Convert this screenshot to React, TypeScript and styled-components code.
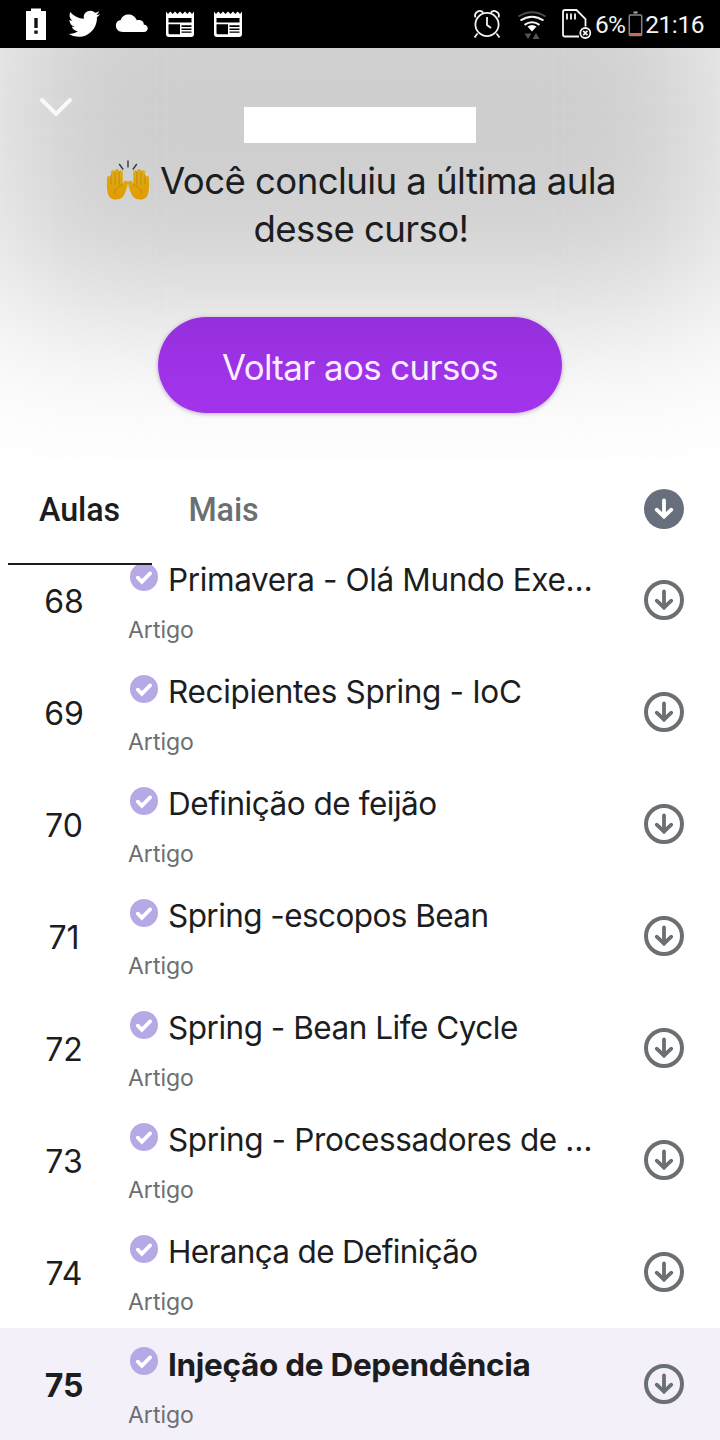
import React from "react";
import styled, { createGlobalStyle } from "styled-components";

const GlobalStyle = createGlobalStyle`
  * { box-sizing: border-box; }
  body { margin: 0; background: #fff; color: #1c1d1f; font-family: Inter, "Liberation Sans", sans-serif; }
`;

const Screen = styled.main`
  width: 720px;
  height: 1440px;
  overflow: hidden;
  display: flex;
  flex-direction: column;
  background: #fff;
`;

const StatusBar = styled.div`
  flex: none;
  height: 48px;
  background: #000;
  color: #f4f4f4;
  display: flex;
  justify-content: space-between;
  svg { display: block; flex: none; }
`;

const StatusText = styled.span<{ $spacing?: number }>`
  font: 400 24.5px/50px Roboto, sans-serif;
  letter-spacing: ${(p) => p.$spacing ?? 0}px;
`;

const StatusRight = styled.div`
  display: flex;
  width: 250px;
`;

const Hero = styled.header`
  flex: none;
  height: 412px;
  position: relative;
  isolation: isolate;
  overflow: hidden;
  display: flex;
  flex-direction: column;
  align-items: center;
  padding-top: 59px;
  &::before {
    content: "";
    position: absolute;
    z-index: -1;
    left: -14px;
    top: -125px;
    width: 748px;
    height: 386px;
    background: #cecece;
    filter: blur(82px);
  }
`;

const Collapse = styled.button`
  position: absolute;
  left: 32px;
  top: 40px;
  padding: 0;
  border: 0;
  background: none;
  svg { display: block; }
`;

const CourseName = styled.div`
  width: 232px;
  height: 36px;
  background: #fff;
`;

const Message = styled.h1`
  margin: 14px 0 0;
  font-size: 36.6px;
  font-weight: 400;
  line-height: 48px;
  letter-spacing: -0.58px;
  text-align: center;
  padding-left: 2px;
`;

const MessageLine = styled.span`
  display: flex;
  justify-content: center;
  svg { margin: 3px 10px 0 0; }
`;

const BackButton = styled.button`
  margin-top: 64px;
  width: 404px;
  height: 96px;
  padding: 3px 0 0;
  border: 0;
  border-radius: 48px;
  background: linear-gradient(#952fdc, #a134eb 80%);
  box-shadow: 0 1px 4px rgba(60, 20, 90, 0.35);
  color: #fbeeff;
  font: 400 34.8px Inter, "Liberation Sans", sans-serif;
  letter-spacing: -0.58px;
`;

const Tabs = styled.nav`
  flex: none;
  height: 105px;
  display: flex;
  align-items: stretch;
  padding: 0 36px 0 8px;
  position: relative;
  z-index: 1;
  background: #fff;
`;

const Tab = styled.button<{ $active?: boolean }>`
  width: 144px;
  padding: 0 1px 3px 0;
  border: 0;
  border-bottom: 2px solid ${(p) => (p.$active ? "#1c1d1f" : "transparent")};
  background: none;
  color: ${(p) => (p.$active ? "#1c1d1f" : "#6a6f73")};
  font: 500 32.3px Roboto, sans-serif;
  letter-spacing: -0.1px;
`;

const TabAction = styled.div`
  margin: 29px 0 0 auto;
`;

const LessonList = styled.div`
  margin-top: -21px;
`;

const Row = styled.article<{ $current?: boolean }>`
  height: 112px;
  display: flex;
  padding: 0 36px 0 0;
  background: ${(p) => (p.$current ? "#f3f0fa" : "#fff")};
  font-weight: ${(p) => (p.$current ? 700 : 400)};
`;

const Index = styled.div`
  width: 128px;
  text-align: center;
  font-size: 32px;
  line-height: 116px;
`;

const Details = styled.div`
  flex: 1;
  padding-top: 14px;
`;

const TitleLine = styled.div`
  height: 44px;
  display: flex;
  svg { display: block; margin: 5px 10px 0 2px; }
`;

const Title = styled.span<{ $spacing: number; $current?: boolean }>`
  font-size: 31.5px;
  line-height: ${(p) => (p.$current ? 45 : 43)}px;
  white-space: nowrap;
  letter-spacing: ${(p) => p.$spacing}px;
`;

const Kind = styled.div<{ $current?: boolean }>`
  margin-top: ${(p) => (p.$current ? 14 : 13)}px;
  font-size: 23px;
  line-height: 30px;
  font-weight: 400;
  color: #6a6f73;
`;

const Download = styled.div`
  padding-top: 36px;
  svg { display: block; }
`;

const DownloadIcon = ({ filled = false }: { filled?: boolean }) => (
  <svg width="40" height="40" viewBox="0 0 40 40" fill="none">
    <circle cx="20" cy="20" r={filled ? 20 : 18} fill={filled ? "#686f7c" : "none"} stroke={filled ? "none" : "#6a6f73"} strokeWidth="4" />
    <path d="M20 11.500v15.500M12.700 20.700l7.300 7 7.300-7" stroke={filled ? "#fff" : "#6a6f73"} strokeWidth="3.800" strokeLinecap="round" strokeLinejoin="miter" />
  </svg>
);

const CheckIcon = () => (
  <svg width="28" height="28" viewBox="0 0 28 28" fill="none">
    <circle cx="14" cy="14" r="14" fill="#b6a9e6" />
    <path d="M7.800 14.700l4.100 4.100 8.200-8.400" stroke="#fff" strokeWidth="3.800" strokeLinecap="round" />
  </svg>
);

const HandsIcon = () => (
  <svg width="44" height="44" viewBox="0 0 44 44" fill="none">
    <defs>
      <linearGradient id="skin" x1="0" y1="8" x2="0" y2="40" gradientUnits="userSpaceOnUse">
        <stop stopColor="#dcae1c" />
        <stop offset="1" stopColor="#e19a00" />
      </linearGradient>
      <g id="hand">
        <path d="M1 18c0-2.600 4-2.600 4 0V12c0-2.800 3.900-2.800 4 0 0-4.200 4.100-4.200 4.200 0 .2-2.600 3.600-2.400 3.600.2v12.300c.3-3 1.500-4.100 4.300-3.600 1.400.2 1 1.800.7 3.200-1.100 5.200-2.500 9.700-5.100 12.900-3.800 3.700-11.200 3.100-13.600-.6C1 33 .7 27 1 18z" fill="url(#skin)" />
        <path d="M5 15v9M9 12v12M13.200 12v12M8.300 33c1-5 4.400-7.700 8.500-8" stroke="#c08200" strokeWidth=".8" strokeLinecap="round" />
      </g>
    </defs>
    <use href="#hand" />
    <use href="#hand" transform="translate(44 0) scale(-1 1)" />
    <path d="M22 .5v7M13.200 4l4 5.500M30.800 4l-4 5.500" stroke="#343a40" strokeWidth="1.400" />
  </svg>
);

const NotificationIcons = () => (
  <svg width="260" height="48" viewBox="0 0 260 48" fill="#fff">
    <path d="M26 11h5V8.500h10V11h5v29H26z" />
    <path d="M34.300 18h3.400v10h-3.400zm0 12.500h3.400v3.300h-3.400z" fill="#111" />
    <path transform="translate(68.200 7.800) scale(1.333)" d="M23.950 4.570a10 10 0 0 1-2.820.770 4.960 4.960 0 0 0 2.160-2.720 10 10 0 0 1-3.120 1.180 4.920 4.920 0 0 0-8.380 4.480C7.690 8.090 4.070 6.130 1.640 3.160a4.920 4.920 0 0 0 1.520 6.570 4.900 4.900 0 0 1-2.230-.610v.060a4.920 4.920 0 0 0 3.950 4.830 5 5 0 0 1-2.210.080 4.940 4.940 0 0 0 4.600 3.420A9.870 9.870 0 0 1 0 19.540a14 14 0 0 0 7.550 2.210c9.050 0 14-7.500 14-13.980 0-.210 0-.420-.020-.630a9.900 9.900 0 0 0 2.460-2.550z" />
    <path d="M123 32c-9 0-9-11.500-2.200-12 1.600-7 13-8 16 .3 5.300-1 7.200 2 6.900 4.200 6 .8 4.800 7.500.3 7.500z" />
    {[166, 214].map((x) => (
      <g key={x} transform={`translate(${x} 11)`}>
        <path d="M0 .5L2 3 4.300.5 6.700 3 9 .5 11.500 3 14 .5 16.500 3 19 .5 21.300 3 23.700.5 26 3 28 .5V23q0 3-3 3H3q-3 0-3-3z" />
        <path d="M2.500 7h23v4.500h-23zM2.500 13.300H14v10H4q-1.500 0-1.500-1.500zM15.500 14.300h10V16h-10zm0 3.100h10v1.500h-10zm0 3h10v1.400h-10z" fill="#000" />
      </g>
    ))}
  </svg>
);

const SystemIcons = () => (
  <svg width="125" height="48" viewBox="470 0 125 48" fill="none" stroke="#f4f4f4" strokeWidth="1.800">
    <circle cx="487" cy="24.500" r="11.600" />
    <path d="M487 17v8l4 3M477.500 33.500l-3 4M496.500 33.500l3 4M475.500 17.500c-2-5 4.500-9 7.800-4.800M498.500 17.500c2-5-4.500-9-7.800-4.800" />
    <g strokeWidth="2">
      <path d="M518.500 16.500q13.500-8.500 27 0" stroke="#4b4b4b" />
      <path d="M520.500 20.500q11.500-7.500 23 0M524.500 24.800q7.500-5 15 0" />
    </g>
    <path d="M527.500 26.500q4.500-3 9 0l-4.500 5z" fill="#fff" stroke="none" />
    <path d="M524.500 33.500h7l-3.500 5.500zM532.500 39l3.500-6 3.500 6z" fill="#555" stroke="none" />
    <path d="M579 36.500h-14q-2 0-2-2V12q0-2 2-2h11.500L585.500 19v7.500M567 13.500v6M571 13.500v6M575 13.500v6" />
    <circle cx="585.300" cy="33" r="5" />
    <path d="M583.200 30.900l4.200 4.200M587.400 30.900l-4.200 4.200" />
  </svg>
);

const BatteryIcon = () => (
  <svg width="20" height="48" viewBox="-2.500 0 20 48" fill="none">
    <path d="M6 12.500h4" stroke="#aaa" strokeWidth="2" />
    <rect x="1.800" y="15" width="12.400" height="20.500" rx="1" stroke="#858585" strokeWidth="1.500" />
    <path d="M2.500 33.500h11v2h-11z" fill="#cd6d50" stroke="#cd6d50" />
  </svg>
);

const lessons = [
  { n: 68, title: "Primavera - Olá Mundo Exe…", spacing: -0.38 },
  { n: 69, title: "Recipientes Spring - IoC", spacing: -0.33 },
  { n: 70, title: "Definição de feijão", spacing: -0.48 },
  { n: 71, title: "Spring -escopos Bean", spacing: -0.57 },
  { n: 72, title: "Spring - Bean Life Cycle", spacing: -0.49 },
  { n: 73, title: "Spring - Processadores de …", spacing: -0.38 },
  { n: 74, title: "Herança de Definição", spacing: -0.66 },
  { n: 75, title: "Injeção de Dependência", spacing: -0.3, current: true },
];

export default function App() {
  return (
    <Screen>
      <GlobalStyle />
      <StatusBar>
        <NotificationIcons />
        <StatusRight>
          <SystemIcons />
          <StatusText $spacing={-0.8}>6%</StatusText>
          <BatteryIcon />
          <StatusText $spacing={-0.4}>21:16</StatusText>
        </StatusRight>
      </StatusBar>
      <Hero>
        <Collapse aria-label="Fechar">
          <svg width="48" height="40" viewBox="0 0 48 40" fill="none">
            <path d="M10 12l14 14 14-14" stroke="#f8f9fb" strokeWidth="4" strokeLinecap="round" />
          </svg>
        </Collapse>
        <CourseName />
        <Message>
          <MessageLine><HandsIcon />Você concluiu a última aula</MessageLine>
          <MessageLine>desse curso!</MessageLine>
        </Message>
        <BackButton>Voltar aos cursos</BackButton>
      </Hero>
      <Tabs>
        <Tab $active>Aulas</Tab>
        <Tab>Mais</Tab>
        <TabAction><DownloadIcon filled /></TabAction>
      </Tabs>
      <LessonList>
        {lessons.map((l) => (
          <Row key={l.n} $current={l.current}>
            <Index>{l.n}</Index>
            <Details>
              <TitleLine>
                <CheckIcon />
                <Title $spacing={l.spacing} $current={l.current}>{l.title}</Title>
              </TitleLine>
              <Kind $current={l.current}>Artigo</Kind>
            </Details>
            <Download><DownloadIcon /></Download>
          </Row>
        ))}
      </LessonList>
    </Screen>
  );
}
